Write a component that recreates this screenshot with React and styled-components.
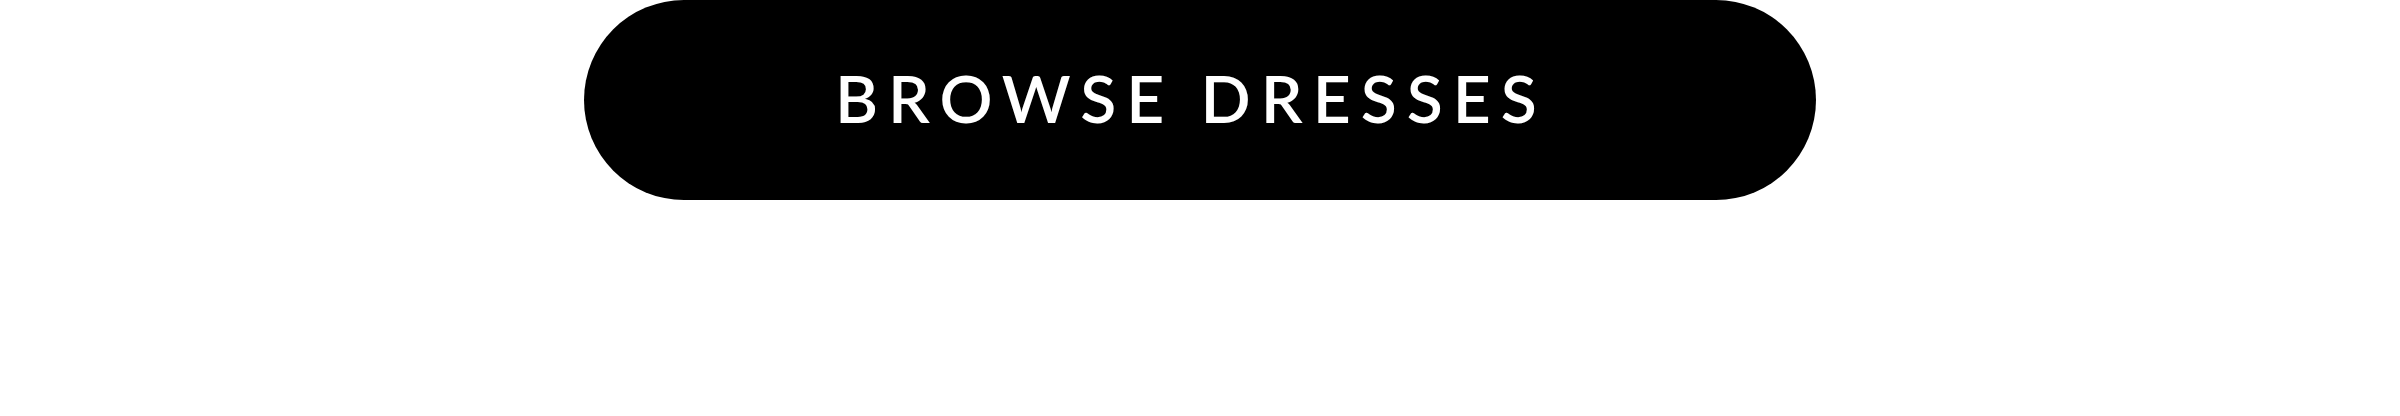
import React from "react";
import styled, { createGlobalStyle } from "styled-components";

const GlobalStyle = createGlobalStyle`
  *, *::before, *::after { box-sizing: border-box; }
  body { margin: 0; background: #fff; }
`;

const CallToAction = styled.main`
  display: flex;
  justify-content: center;
  padding-bottom: 216px;
`;

const PillLink = styled.a`
  width: 1232px;
  max-width: 100%;
  padding: 58px clamp(24px, 12vw, 251px) 62px;
  border-radius: 100px;
  background: #000;
  color: #fff;
  font-family: Lato, "Liberation Sans", sans-serif;
  font-size: 66px;
  font-weight: 600;
  line-height: 80px;
  letter-spacing: 10px;
  text-decoration: none;
  text-transform: uppercase;
`;

export default function App() {
  return (
    <>
      <GlobalStyle />
      <CallToAction>
        <PillLink href="#dresses">Browse Dresses</PillLink>
      </CallToAction>
    </>
  );
}
